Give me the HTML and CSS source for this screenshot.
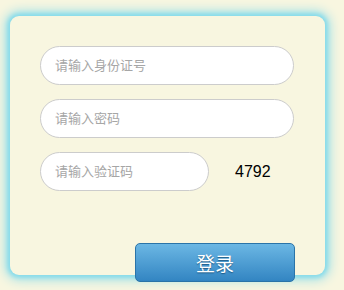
FILE: index.html
```html
<!DOCTYPE html>
<html>
<head>
<meta charset="utf-8">
<link rel="stylesheet" href="styles.css">
</head>
<body>
<div class="card">
  <form class="form">
    <input class="field" type="text" placeholder="请输入身份证号">
    <input class="field" type="password" placeholder="请输入密码">
    <div class="code-row">
      <input class="field field-short" type="text" placeholder="请输入验证码">
      <span class="code">4792</span>
    </div>
    <button class="login" type="button">登录</button>
  </form>
</div>
</body>
</html>
```
FILE: styles.css
```css
html, body {
  margin: 0;
  padding: 0;
  background: #f8f6e0;
  width: 344px;
  height: 290px;
  overflow: hidden;
}
body {
  padding: 16px 0 0 10px;
  box-sizing: border-box;
  font-family: "Liberation Sans", Arial, "Noto Sans CJK SC", sans-serif;
}
.card {
  width: 315px;
  height: 259px;
  background: #f8f6e0;
  border-radius: 9px;
  box-shadow: 0 0 4px 2px #84dbeb, 0 0 12px 4px #8edcea;
  box-sizing: border-box;
  padding: 30px 0 0 30px;
}
.form {
  display: flex;
  flex-direction: column;
  align-items: flex-start;
}
.field {
  box-sizing: border-box;
  width: 254px;
  height: 39px;
  border: 1px solid #cccccc;
  border-radius: 20px;
  background: #fff;
  padding: 0 14px;
  margin: 0 0 14px 0;
  font-family: "Liberation Sans", Arial, "Noto Sans CJK SC", sans-serif;
  font-size: 13px;
  color: #333;
  outline: none;
}
.field::placeholder {
  color: #a6a6a6;
}
.code-row {
  display: flex;
  align-items: center;
  margin: 0;
}
.field-short {
  width: 169px;
  margin: 0;
}
.code {
  margin-left: 26px;
  font-size: 16px;
  color: #000;
}
.login {
  margin: 52px 0 0 95px;
  width: 160px;
  height: 39px;
  border: 1px solid #2b74a8;
  border-radius: 5px;
  background: linear-gradient(#6bb7e4, #3385c2);
  color: #fff;
  font-family: "Noto Sans CJK SC", sans-serif;
  font-size: 19px;
  text-shadow: 0 1px 1px #1d5a86;
  padding: 0;
  cursor: pointer;
}
```
